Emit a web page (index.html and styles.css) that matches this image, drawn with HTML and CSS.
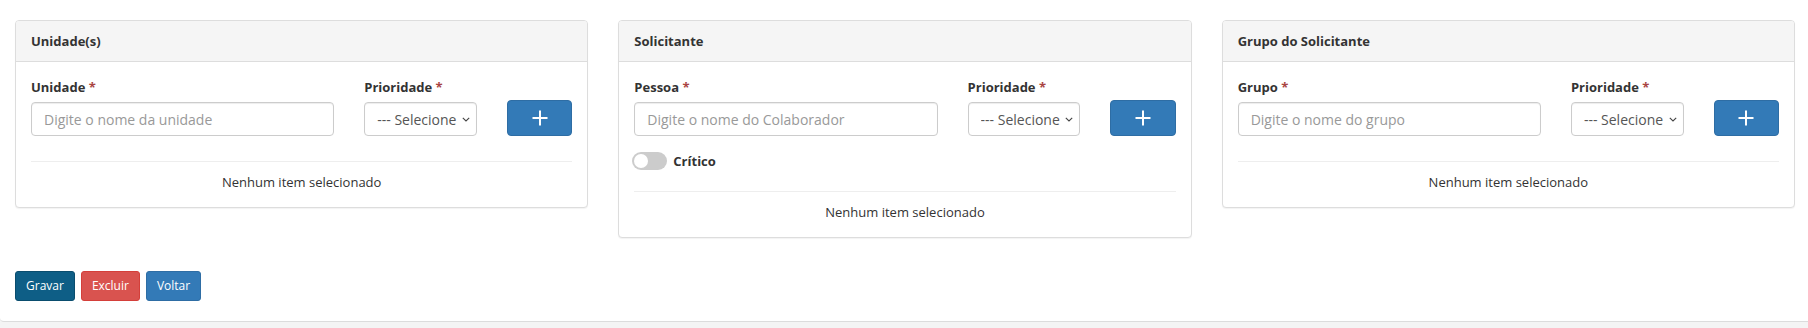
FILE: index.html
```html
<!DOCTYPE html>
<html lang="pt-BR">
<head>
<meta charset="utf-8">
<title>Solicitante</title>
<link rel="stylesheet" href="styles.css">
</head>
<body>
<div class="box">
  <div class="row">
    <div class="col">
      <div class="panel">
        <div class="panel-heading">Unidade(s)</div>
        <div class="panel-body">
          <div class="form-row">
            <div class="fcol c7">
              <label class="lbl">Unidade <span class="req">*</span></label>
              <input class="input" type="text" placeholder="Digite o nome da unidade">
            </div>
            <div class="fcol c3">
              <label class="lbl">Prioridade <span class="req">*</span></label>
              <div class="select-wrap">
                <select class="select"><option>--- Selecione</option></select>
                <svg class="chev" width="8" height="5" viewBox="0 0 8 5"><path d="M0.8 0.8 L4 4 L7.2 0.8" fill="none" stroke="#444" stroke-width="1.1"/></svg>
              </div>
            </div>
            <div class="fcol c2">
              <button class="btn-add" type="button"><svg width="16" height="16" viewBox="0 0 16 16"><path d="M8 0.5V15.5M0.5 8H15.5" stroke="#fff" stroke-width="2"/></svg></button>
            </div>
          </div>
          <hr class="sep">
          <p class="empty">Nenhum item selecionado</p>
        </div>
      </div>
    </div>
    <div class="col">
      <div class="panel">
        <div class="panel-heading">Solicitante</div>
        <div class="panel-body">
          <div class="form-row">
            <div class="fcol c7">
              <label class="lbl">Pessoa <span class="req">*</span></label>
              <input class="input" type="text" placeholder="Digite o nome do Colaborador">
            </div>
            <div class="fcol c3">
              <label class="lbl">Prioridade <span class="req">*</span></label>
              <div class="select-wrap">
                <select class="select"><option>--- Selecione</option></select>
                <svg class="chev" width="8" height="5" viewBox="0 0 8 5"><path d="M0.8 0.8 L4 4 L7.2 0.8" fill="none" stroke="#444" stroke-width="1.1"/></svg>
              </div>
            </div>
            <div class="fcol c2">
              <button class="btn-add" type="button"><svg width="16" height="16" viewBox="0 0 16 16"><path d="M8 0.5V15.5M0.5 8H15.5" stroke="#fff" stroke-width="2"/></svg></button>
            </div>
          </div>
          <div class="toggle-row">
            <span class="toggle"><span class="knob"></span></span>
            <span class="toggle-label">Crítico</span>
          </div>
          <hr class="sep">
          <p class="empty">Nenhum item selecionado</p>
        </div>
      </div>
    </div>
    <div class="col">
      <div class="panel">
        <div class="panel-heading">Grupo do Solicitante</div>
        <div class="panel-body">
          <div class="form-row">
            <div class="fcol c7">
              <label class="lbl">Grupo <span class="req">*</span></label>
              <input class="input" type="text" placeholder="Digite o nome do grupo">
            </div>
            <div class="fcol c3">
              <label class="lbl">Prioridade <span class="req">*</span></label>
              <div class="select-wrap">
                <select class="select"><option>--- Selecione</option></select>
                <svg class="chev" width="8" height="5" viewBox="0 0 8 5"><path d="M0.8 0.8 L4 4 L7.2 0.8" fill="none" stroke="#444" stroke-width="1.1"/></svg>
              </div>
            </div>
            <div class="fcol c2">
              <button class="btn-add" type="button"><svg width="16" height="16" viewBox="0 0 16 16"><path d="M8 0.5V15.5M0.5 8H15.5" stroke="#fff" stroke-width="2"/></svg></button>
            </div>
          </div>
          <hr class="sep">
          <p class="empty">Nenhum item selecionado</p>
        </div>
      </div>
    </div>
  </div>
  <div class="actions">
    <button class="btn btn-save" type="button">Gravar</button>
    <button class="btn btn-del" type="button">Excluir</button>
    <button class="btn btn-back" type="button">Voltar</button>
  </div>
</div>
</body>
</html>
```
FILE: styles.css
```css
* { box-sizing: border-box; }
html, body { margin: 0; padding: 0; }
body {
  background: #f4f4f4;
  font-family: "Open Sans", "Noto Sans", sans-serif;
  color: #333;
  font-size: 13px;
  overflow: hidden;
}
.box {
  background: #fff;
  padding: 20px 0 20px 0;
  border-bottom: 1px solid #dcdcdc;
  border-bottom-left-radius: 4px;
}
.row {
  display: flex;
  align-items: flex-start;
  margin-right: -2px;
}
.col {
  flex: 1 1 0;
  min-width: 0;
  padding: 0 15px;
}
.panel {
  border: 1px solid #ddd;
  border-radius: 4px;
  background: #fff;
  box-shadow: 0 1px 1px rgba(0,0,0,0.05);
  margin-bottom: 20px;
}
.panel-heading {
  background: #f5f5f5;
  border-bottom: 1px solid #ddd;
  border-radius: 3px 3px 0 0;
  padding: 10px 15px;
  line-height: 20px;
  font-weight: 700;
  font-size: 13px;
  color: #333;
}
.panel-body {
  display: flex;
  flex-direction: column;
  padding: 15px;
}
.form-row {
  display: flex;
  margin: 0 -15px 15px;
}
.fcol { padding: 0 15px; }
.c7 { width: 58.3333%; }
.c3 { width: 25%; }
.c2 { width: 16.6667%; }
.lbl {
  display: block;
  font-weight: 700;
  line-height: 20px;
  margin-bottom: 5px;
  font-size: 13px;
}
.req { color: #a94442; }
.input {
  display: block;
  width: 100%;
  height: 34px;
  padding: 6px 12px;
  border: 1px solid #ccc;
  border-radius: 4px;
  font-family: inherit;
  font-size: 14px;
  color: #555;
  box-shadow: inset 0 1px 1px rgba(0,0,0,0.075);
  outline: none;
}
.input::placeholder { color: #999; }
.select-wrap { position: relative; }
.select {
  display: block;
  width: 100%;
  height: 34px;
  padding: 6px 12px;
  border: 1px solid #ccc;
  border-radius: 4px;
  background: #fff;
  font-family: inherit;
  font-size: 14px;
  color: #555;
  appearance: none;
  -webkit-appearance: none;
  box-shadow: inset 0 1px 1px rgba(0,0,0,0.075);
}
.chev {
  position: absolute;
  right: 7px;
  top: 15px;
  pointer-events: none;
}
.btn-add {
  display: flex;
  align-items: center;
  justify-content: center;
  width: 100%;
  height: 36px;
  margin-top: 23px;
  padding: 0;
  background: #337ab7;
  border: 1px solid #2e6da4;
  border-radius: 4px;
}
.toggle-row {
  display: flex;
  align-items: center;
  height: 20px;
  margin-bottom: 10px;
}
.toggle {
  display: flex;
  align-items: center;
  width: 35px;
  height: 18px;
  border-radius: 9px;
  background: #ccc;
  padding: 0 2px;
  margin-left: -2px;
}
.knob {
  width: 14px;
  height: 14px;
  border-radius: 50%;
  background: #fff;
}
.toggle-label {
  font-weight: 700;
  margin-left: 6px;
  font-size: 13px;
}
.sep {
  width: 100%;
  border: 0;
  border-top: 1px solid #eee;
  margin: 10px 0;
  height: 0;
}
.empty {
  margin: 0;
  text-align: center;
  line-height: 20px;
  font-size: 13px;
  color: #333;
}
.actions {
  display: flex;
  gap: 6px;
  padding: 13px 15px 0;
}
.btn {
  font-family: inherit;
  font-size: 12px;
  line-height: 18px;
  padding: 5px 10px;
  border: 1px solid transparent;
  border-radius: 3px;
  color: #fff;
}
.btn-save { background: #0e5e86; border-color: #0a4d6e; }
.btn-del { background: #d9534f; border-color: #d43f3a; }
.btn-back { background: #337ab7; border-color: #2e6da4; }
```
